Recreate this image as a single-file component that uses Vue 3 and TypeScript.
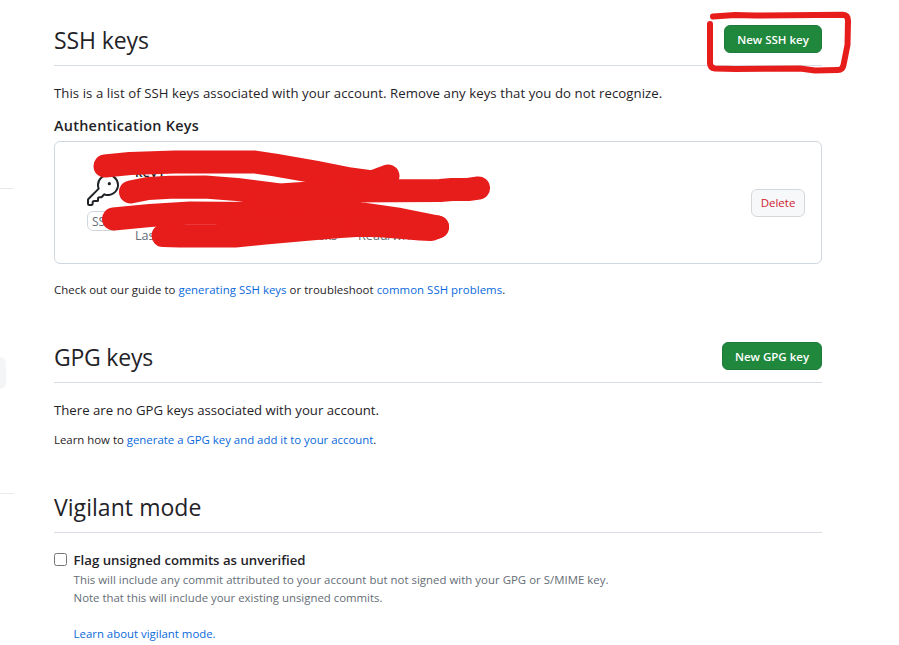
<script setup lang="ts">
const keyPath =
  'M15.75 0a8.25 8.25 0 1 1-2.541 16.101l-1.636 1.636a1.744 1.744 0 0 1-1.237.513H9.25a.25.25 0 0 0-.25.25v1.448a.876.876 0 0 1-.256.619l-.214.213a.75.75 0 0 1-.545.22H5.25a.25.25 0 0 0-.25.25v1A1.75 1.75 0 0 1 3.25 24h-1.5A1.75 1.75 0 0 1 0 22.25v-2.836c0-.464.185-.908.513-1.236l7.386-7.388A8.249 8.249 0 0 1 15.75 0ZM9 8.25a6.733 6.733 0 0 0 .463 2.462.75.75 0 0 1-.168.804l-7.722 7.721a.25.25 0 0 0-.073.177v2.836c0 .138.112.25.25.25h1.5a.25.25 0 0 0 .25-.25v-1c0-.966.784-1.75 1.75-1.75H7.5v-1c0-.966.784-1.75 1.75-1.75h1.086a.25.25 0 0 0 .177-.073l1.971-1.972a.75.75 0 0 1 .804-.168A6.75 6.75 0 1 0 9 8.25Z'

const redactions: string[] = [
  'M105 166L130 163.500L175 162L255 162L275 165L315 172L350 179L372 182L388 176',
  'M130.500 192L148 188.500L170 187.200L205 187L237 189.500L280 195L340 191L440 190.500L452 189.500L468 189.500L478.500 188',
  'M113.500 219L150 215.500L190 213L260 213.500L362 214L400 219.500L437.500 227',
  'M163 235.500L180 236L235 236L265 233L310 229L340 226.500L360 225.200L380 225.800L400 227.300L420 229L431 229.500L437.500 227',
  'M265 200L350 200',
  'M228 225L340 221',
]
</script>

<template>
  <div class="page">
    <aside class="sidebar">
      <hr class="side-rule" />
      <div class="side-item"></div>
      <hr class="side-rule" />
    </aside>
    <main class="settings">
      <section class="ssh">
        <header class="subhead">
          <h2>SSH keys</h2>
          <button class="btn primary ssh-btn" type="button"><span>New SSH key</span></button>
        </header>
        <p class="lead ssh-lead">This is a list of SSH keys associated with your account. Remove any keys that you do not recognize.</p>
        <h3 class="auth">Authentication Keys</h3>
        <div class="key-box">
          <div class="key-kind">
            <svg class="key-icon" viewBox="0 0 24 24" width="32" height="32">
              <path d="M16.75 8.500a1.250 1.250 0 1 0 0-2.500 1.250 1.250 0 0 0 0 2.500Z" />
              <path :d="keyPath" />
            </svg>
            <span class="badge">SSH</span>
          </div>
          <div class="key-info">
            <strong>key1</strong>
            <div class="usage"><span>Last</span><span class="weeks">weeks</span><span class="dash">—</span><span>Read/write</span></div>
          </div>
          <button class="btn danger" type="button">Delete</button>
        </div>
        <p class="small guide">Check out our guide to <a>generating SSH keys</a> or troubleshoot <a>common SSH problems</a>.</p>
      </section>

      <section class="gpg">
        <header class="subhead">
          <h2 class="gpg-title">GPG keys</h2>
          <button class="btn primary gpg-btn" type="button"><span>New GPG key</span></button>
        </header>
        <p class="lead">There are no GPG keys associated with your account.</p>
        <p class="small learn">Learn how to <a>generate a GPG key and add it to your account</a>.</p>
      </section>

      <section class="vigilant">
        <header class="subhead">
          <h2 class="vigilant-title">Vigilant mode</h2>
        </header>
        <div class="option">
          <input id="flag" type="checkbox" />
          <div>
            <label for="flag">Flag unsigned commits as unverified</label>
            <p class="note note-a">This will include any commit attributed to your account but not signed with your GPG or S/MIME key.</p>
            <p class="note">Note that this will include your existing unsigned commits.</p>
            <p class="note more"><a>Learn about vigilant mode.</a></p>
          </div>
        </div>
      </section>
    </main>

    <svg class="marker" viewBox="0 0 899 645" width="899" height="645">
      <g stroke-width="23">
        <path v-for="(d, i) in redactions" :key="i" :d="d" />
      </g>
      <path
        stroke-width="6"
        d="M713 16.500L735 15L755 15.500L843 14.800Q848 15 848 21L847.500 45L843.500 65Q842.500 70 838 70L815 70.500L800 68.500L735 69L715 68.500Q710 68 710 63L710 24"
      />
    </svg>
  </div>
</template>

<style>
body {
  margin: 0;
  background: #fff;
}
</style>

<style scoped>
.page {
  position: relative;
  display: flex;
  width: 899px;
  height: 645px;
  overflow: hidden;
  color: #1f2328;
  font-family: 'Open Sans', 'Noto Sans', sans-serif;
  font-size: 13.2px;
}
.sidebar {
  width: 54px;
  flex: none;
  padding-top: 188px;
  box-sizing: border-box;
}
.side-rule {
  width: 14px;
  height: 1px;
  margin: 0;
  border: 0;
  background: #e6e9ed;
}
.side-item {
  width: 6px;
  height: 32px;
  margin: 168px 0 104px;
  border-radius: 0 6px 6px 0;
  background: #f4f5f7;
}
.settings {
  width: 768px;
  padding-top: 25px;
}
.ssh {
  height: 317px;
}
.gpg {
  height: 150px;
}
.subhead {
  display: flex;
  justify-content: space-between;
  align-items: flex-start;
  height: 40px;
  border-bottom: 1px solid #d8dee4;
}
h2,
h3,
p {
  margin: 0;
}
h2 {
  font-size: 23px;
  font-weight: 400;
  line-height: 30px;
  letter-spacing: -0.1px;
}
.gpg-title {
  letter-spacing: -0.22px;
}
.vigilant-title {
  letter-spacing: 0.05px;
}
.btn {
  box-sizing: border-box;
  height: 28px;
  padding: 1px 0 0;
  border-radius: 6px;
  font-family: inherit;
  font-size: 11.5px;
  line-height: 25px;
  white-space: nowrap;
}
.primary {
  border: 1px solid #1f7b39;
  background: #1f883d;
  color: #fff;
  font-weight: 600;
}
.ssh-btn {
  width: 98px;
}
.gpg-btn {
  width: 100px;
}
.danger {
  width: 54px;
  padding: 0;
  border: 1px solid #d5d8da;
  background: #f6f8fa;
  color: #cf222e;
}
.lead {
  padding-top: 17px;
  line-height: 21px;
  white-space: nowrap;
}
.ssh-lead {
  letter-spacing: 0.06px;
}
.auth {
  padding-top: 11px;
  font-size: 14.4px;
  font-weight: 600;
  line-height: 21px;
  letter-spacing: 0.28px;
}
.key-box {
  display: flex;
  align-items: center;
  box-sizing: border-box;
  height: 123px;
  margin-top: 5px;
  padding: 0 16px 0 32px;
  border: 1px solid #d0d7de;
  border-radius: 6px;
}
.key-kind {
  display: flex;
  flex-direction: column;
  gap: 5px;
  width: 48px;
}
.key-icon {
  display: block;
  fill: #1f2328;
}
.badge {
  box-sizing: border-box;
  width: 32px;
  height: 20px;
  padding-left: 4px;
  border: 1px solid #d0d7de;
  border-radius: 6px;
  color: #656d76;
  font-size: 12px;
  line-height: 19px;
}
.key-info {
  display: flex;
  flex: 1;
  flex-direction: column;
  gap: 42px;
  padding-top: 2px;
}
.key-info strong {
  font-weight: 600;
  line-height: 21px;
}
.usage {
  display: flex;
  color: #656d76;
  font-size: 12.6px;
  line-height: 21px;
}
.weeks {
  width: 178px;
  text-align: right;
}
.dash {
  width: 21px;
  padding-left: 3px;
  box-sizing: border-box;
}
.small {
  font-size: 11.4px;
  line-height: 18px;
  white-space: nowrap;
}
.guide {
  padding-top: 17px;
  letter-spacing: 0.04px;
}
.learn {
  padding-top: 10px;
}
a {
  color: #0969da;
}
.option {
  display: flex;
  gap: 6.6px;
  padding-top: 17px;
}
input {
  width: 13px;
  height: 13px;
  margin: 3px 0 0;
}
label {
  display: block;
  font-weight: 600;
  line-height: 21px;
}
.note {
  color: #656d76;
  font-size: 11.4px;
  line-height: 18px;
  white-space: nowrap;
}
.note-a {
  letter-spacing: 0.03px;
}
.more {
  padding-top: 18px;
}
.marker {
  position: absolute;
  top: 0;
  left: 0;
  fill: none;
  stroke: #e71d1c;
  stroke-linecap: round;
  stroke-linejoin: round;
  pointer-events: none;
}
</style>
